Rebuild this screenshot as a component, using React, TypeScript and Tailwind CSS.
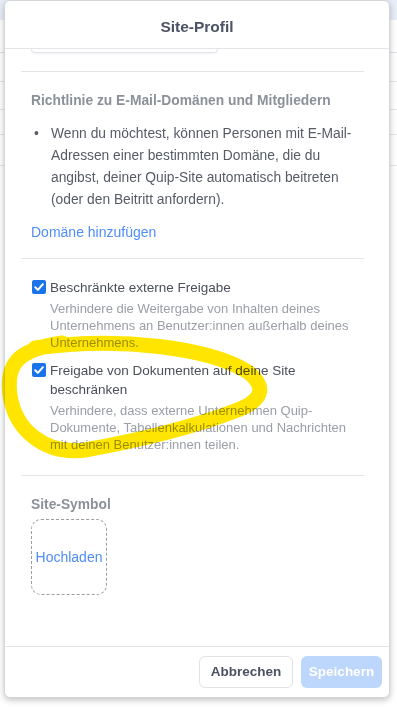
import React, { useState } from 'react';

const font = { fontFamily: '"Liberation Sans", Arial, sans-serif' };

const Check: React.FC<{ checked: boolean; onChange: () => void }> = ({ checked, onChange }) => (
  <button
    type="button"
    onClick={onChange}
    className={`mt-[2px] flex h-[14px] w-[14px] shrink-0 items-center justify-center rounded-[2px] ${checked ? 'bg-[#1a73e8]' : 'border border-[#999] bg-white'}`}
  >
    {checked && (
      <svg viewBox="0 0 14 14" className="h-[14px] w-[14px]">
        <path d="M3.2 7.3 L5.9 9.9 L10.9 4.2" fill="none" stroke="#fff" strokeWidth="2" strokeLinecap="round" strokeLinejoin="round" />
      </svg>
    )}
  </button>
);

const App: React.FC = () => {
  const [restrict, setRestrict] = useState(true);
  const [limitDocs, setLimitDocs] = useState(true);

  return (
    <div className="relative h-[707px] w-[397px] overflow-hidden bg-white" style={font}>
      {/* page behind the dialog */}
      <div className="flex flex-col">
        <div className="h-[20px] bg-[#e8eef8]" />
        <div className="h-[33px] border-b border-[#dcdfe4]" />
        <div className="h-[29px] border-b border-[#e4e6ea]" />
        <div className="h-[28px] border-b border-[#e4e6ea]" />
        <div className="h-[25px] border-b border-[#e4e6ea]" />
        <div className="h-[31px] border-b border-[#e4e6ea]" />
      </div>

      {/* dialog */}
      <div className="absolute left-[4px] top-0 flex h-[698px] w-[386px] flex-col rounded-[6px] border border-[#d4d6da] bg-white shadow-[0_2px_6px_rgba(0,0,0,0.25)]">
        <div className="flex h-[48px] shrink-0 items-center justify-center border-b border-[#e3e5e8] pt-[4px]">
          <h2 className="text-[15.5px] font-bold text-[#4b5264]">Site-Profil</h2>
        </div>

        <div className="flex-1 overflow-hidden pl-4 pr-[25px]">
          <div className="ml-[10px] h-[4px] w-[187px] rounded-b-md border-x border-b border-[#e2e4e8] shadow-[0_1px_2px_rgba(0,0,0,0.06)]" />

          <div className="mt-[18px] border-t border-[#e3e5e8] px-[10px] pb-[16px] pt-[20px]">
            <h3 className="text-[13.8px] font-bold leading-[18px] text-[#8c9099]">Richtlinie zu E-Mail-Domänen und Mitgliedern</h3>
            <ul className="mt-[13px] flex flex-col text-[13.8px] leading-[22px] text-[#565b65]">
              <li className="flex">
                <span className="w-[20px] shrink-0 pl-[3px]">•</span>
                <span>Wenn du möchtest, können Personen mit E-Mail-Adressen einer bestimmten Domäne, die du angibst, deiner Quip-Site automatisch beitreten (oder den Beitritt anfordern).</span>
              </li>
            </ul>
            <button type="button" className="mt-[11px] block text-[14px] leading-[20px] text-[#4f8ef5]">Domäne hinzufügen</button>
          </div>

          <div className="flex flex-col gap-[10px] border-t border-[#e3e5e8] pb-[22px] pl-[11px] pt-[19px]">
            <label className="flex gap-[4px]">
              <Check checked={restrict} onChange={() => setRestrict(!restrict)} />
              <div>
                <div className="text-[13.5px] leading-[19px] text-[#4a4f59]">Beschränkte externe Freigabe</div>
                <p className="mt-[3px] text-[13px] leading-[17px] text-[#9a9ea6]">Verhindere die Weitergabe von Inhalten deines Unternehmens an Benutzer:innen außerhalb deines Unternehmens.</p>
              </div>
            </label>
            <label className="flex gap-[4px]">
              <Check checked={limitDocs} onChange={() => setLimitDocs(!limitDocs)} />
              <div>
                <div className="text-[13.5px] leading-[19px] text-[#4a4f59]">Freigabe von Dokumenten auf deine Site beschränken</div>
                <p className="mt-[3px] text-[13px] leading-[17px] text-[#9a9ea6]">Verhindere, dass externe Unternehmen Quip-Dokumente, Tabellenkalkulationen und Nachrichten mit deinen Benutzer:innen teilen.</p>
              </div>
            </label>
          </div>

          <div className="border-t border-[#e3e5e8] px-[10px] pt-[20px]">
            <h3 className="text-[13.8px] font-bold leading-[18px] text-[#8c9099]">Site-Symbol</h3>
            <button type="button" className="mt-[5px] flex h-[76px] w-[76px] items-center justify-center rounded-[10px] border border-dashed border-[#9a9ca2] text-[14px] text-[#4f8ef5]">
              Hochladen
            </button>
          </div>
        </div>

        <div className="flex shrink-0 justify-end gap-[8px] border-t border-[#e3e5e8] pb-[9px] pr-[7px] pt-[9px]">
          <button type="button" className="h-[32px] w-[94px] rounded-[6px] border border-[#e0e2e6] bg-white text-[13.5px] font-bold text-[#4b5264]">Abbrechen</button>
          <button type="button" disabled className="h-[32px] w-[81px] rounded-[6px] bg-[#bdd6fb] text-[13.5px] font-bold text-white">Speichern</button>
        </div>
      </div>

      {/* yellow hand-drawn highlight */}
      <svg className="pointer-events-none absolute left-0 top-0 mix-blend-multiply" width="397" height="707" viewBox="0 0 397 707">
        <path
          d="M35 348 C120 336 210 348 248 372 C268 388 262 401 235 411 C190 428 130 442 85 450 C45 455 15 430 10 395 C6 365 16 350 62 343"
          fill="none"
          stroke="#ffe500"
          strokeWidth="15"
          strokeLinecap="round"
          strokeLinejoin="round"
        />
      </svg>
    </div>
  );
};

export default App;
